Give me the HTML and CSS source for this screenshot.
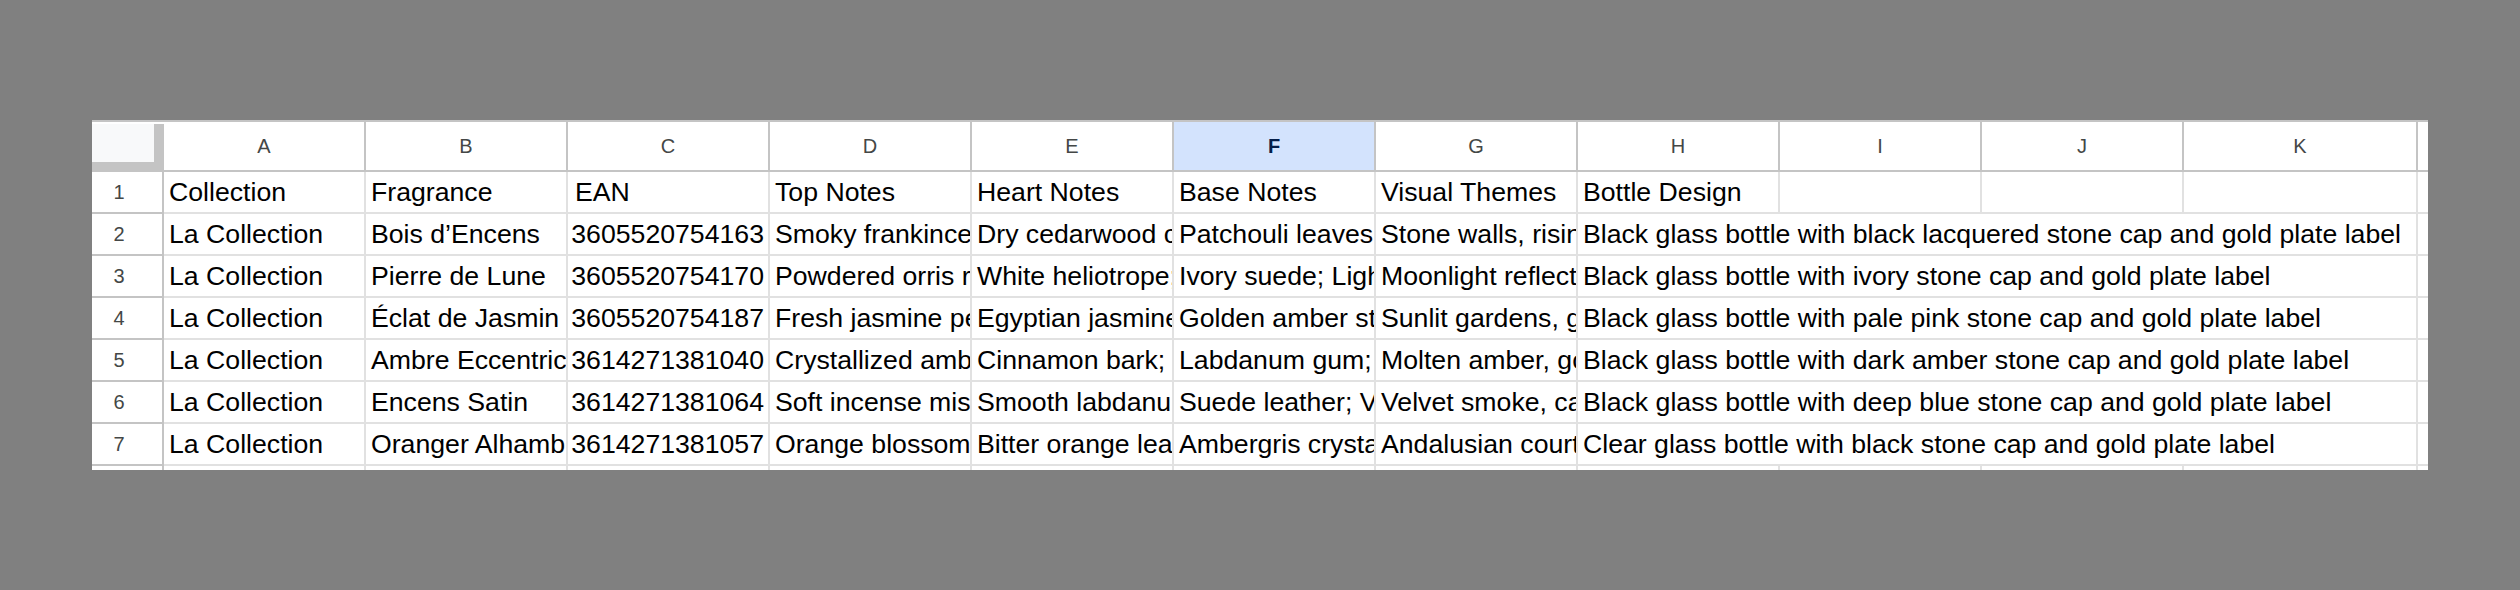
FILE: index.html
```html
<!DOCTYPE html>
<html lang="en">
<head>
<meta charset="utf-8">
<title>Sheet</title>
<link rel="stylesheet" href="styles.css">
</head>
<body>
<div class="sheet">
  <div class="grid">
    <div class="corner"><div class="corner-box"></div></div>
    <div class="colhead">A</div>
    <div class="colhead">B</div>
    <div class="colhead">C</div>
    <div class="colhead">D</div>
    <div class="colhead">E</div>
    <div class="colhead sel">F</div>
    <div class="colhead">G</div>
    <div class="colhead">H</div>
    <div class="colhead">I</div>
    <div class="colhead">J</div>
    <div class="colhead">K</div>
    <div class="colhead last"></div>

    <div class="rowhead">1</div>
    <div class="cell">Collection</div>
    <div class="cell">Fragrance</div>
    <div class="cell indent">EAN</div>
    <div class="cell">Top Notes</div>
    <div class="cell">Heart Notes</div>
    <div class="cell">Base Notes</div>
    <div class="cell">Visual Themes</div>
    <div class="cell">Bottle Design</div>
    <div class="cell"></div>
    <div class="cell"></div>
    <div class="cell"></div>
    <div class="cell last"></div>

    <div class="rowhead">2</div>
    <div class="cell">La Collection</div>
    <div class="cell">Bois d’Encens</div>
    <div class="cell num">3605520754163</div>
    <div class="cell">Smoky frankincense; Pink pepper</div>
    <div class="cell">Dry cedarwood chips; Incense resin</div>
    <div class="cell">Patchouli leaves; Vetiver</div>
    <div class="cell">Stone walls, rising smoke</div>
    <div class="cell span4">Black glass bottle with black lacquered stone cap and gold plate label</div>
    <div class="cell last"></div>

    <div class="rowhead">3</div>
    <div class="cell">La Collection</div>
    <div class="cell">Pierre de Lune</div>
    <div class="cell num">3605520754170</div>
    <div class="cell">Powdered orris root; Bergamot</div>
    <div class="cell">White heliotrope; Violet</div>
    <div class="cell">Ivory suede; Light musk</div>
    <div class="cell">Moonlight reflections on stone</div>
    <div class="cell span4">Black glass bottle with ivory stone cap and gold plate label</div>
    <div class="cell last"></div>

    <div class="rowhead">4</div>
    <div class="cell">La Collection</div>
    <div class="cell">Éclat de Jasmin</div>
    <div class="cell num">3605520754187</div>
    <div class="cell">Fresh jasmine petals; Mandarin</div>
    <div class="cell">Egyptian jasmine; Tuberose</div>
    <div class="cell">Golden amber stones; Musk</div>
    <div class="cell">Sunlit gardens, golden light</div>
    <div class="cell span4">Black glass bottle with pale pink stone cap and gold plate label</div>
    <div class="cell last"></div>

    <div class="rowhead">5</div>
    <div class="cell">La Collection</div>
    <div class="cell">Ambre Eccentric</div>
    <div class="cell num">3614271381040</div>
    <div class="cell">Crystallized amber; Saffron</div>
    <div class="cell">Cinnamon bark; Rose</div>
    <div class="cell">Labdanum gum; Benzoin</div>
    <div class="cell">Molten amber, golden glow</div>
    <div class="cell span4">Black glass bottle with dark amber stone cap and gold plate label</div>
    <div class="cell last"></div>

    <div class="rowhead">6</div>
    <div class="cell">La Collection</div>
    <div class="cell">Encens Satin</div>
    <div class="cell num">3614271381064</div>
    <div class="cell">Soft incense mist; Elemi</div>
    <div class="cell">Smooth labdanum; Iris</div>
    <div class="cell">Suede leather; Vanilla</div>
    <div class="cell">Velvet smoke, candlelight</div>
    <div class="cell span4">Black glass bottle with deep blue stone cap and gold plate label</div>
    <div class="cell last"></div>

    <div class="rowhead">7</div>
    <div class="cell">La Collection</div>
    <div class="cell">Oranger Alhambra</div>
    <div class="cell num">3614271381057</div>
    <div class="cell">Orange blossom; Neroli</div>
    <div class="cell">Bitter orange leaves; Petitgrain</div>
    <div class="cell">Ambergris crystals; Musk</div>
    <div class="cell">Andalusian courtyards</div>
    <div class="cell span4">Clear glass bottle with black stone cap and gold plate label</div>
    <div class="cell last"></div>

    <div class="rowhead">8</div>
    <div class="cell"></div>
    <div class="cell"></div>
    <div class="cell"></div>
    <div class="cell"></div>
    <div class="cell"></div>
    <div class="cell"></div>
    <div class="cell"></div>
    <div class="cell"></div>
    <div class="cell"></div>
    <div class="cell"></div>
    <div class="cell"></div>
    <div class="cell last"></div>
  </div>
</div>
</body>
</html>
```

FILE: styles.css
```css
html, body {
  margin: 0;
  padding: 0;
  background: #808080;
}

body {
  padding: 120px 0 0 92px;
  font-family: "Liberation Sans", Arial, sans-serif;
}

.sheet {
  width: 2336px;
  height: 350px;
  overflow: hidden;
  background: #ffffff;
  border-top: 2px solid #c4c4c4;
  box-sizing: border-box;
}

.grid {
  display: grid;
  grid-template-columns: 72px repeat(10, 202px) 234px 10px;
  grid-template-rows: 50px;
  grid-auto-rows: 42px;
}

.grid > div {
  box-sizing: border-box;
  overflow: hidden;
  white-space: nowrap;
}

.corner {
  background: #c4c4c4;
  border-top: 2px solid #ffffff;
}

.corner-box {
  width: 62px;
  height: 38px;
  background: #f8f9fa;
}

.colhead {
  display: flex;
  align-items: center;
  justify-content: center;
  border-right: 2px solid #c4c4c4;
  border-bottom: 2px solid #c4c4c4;
  font-size: 20px;
  color: #444746;
}

.colhead.sel {
  background: #d3e3fd;
  color: #041e49;
  font-weight: bold;
}

.colhead.last,
.cell.last {
  border-right: none;
}

.rowhead {
  border-right: 2px solid #c4c4c4;
  border-bottom: 2px solid #c4c4c4;
  font-size: 20px;
  color: #444746;
  text-align: center;
  padding-right: 16px;
  line-height: 40px;
}

.cell {
  border-right: 2px solid #e1e1e1;
  border-bottom: 2px solid #e1e1e1;
  font-size: 26.67px;
  color: #000000;
  line-height: 41px;
  padding: 0 5px;
}

.cell.indent {
  padding-left: 7px;
}

.cell.num {
  text-align: right;
  padding: 0 4px 0 0;
}

.cell.span4 {
  grid-column: span 4;
}
```
